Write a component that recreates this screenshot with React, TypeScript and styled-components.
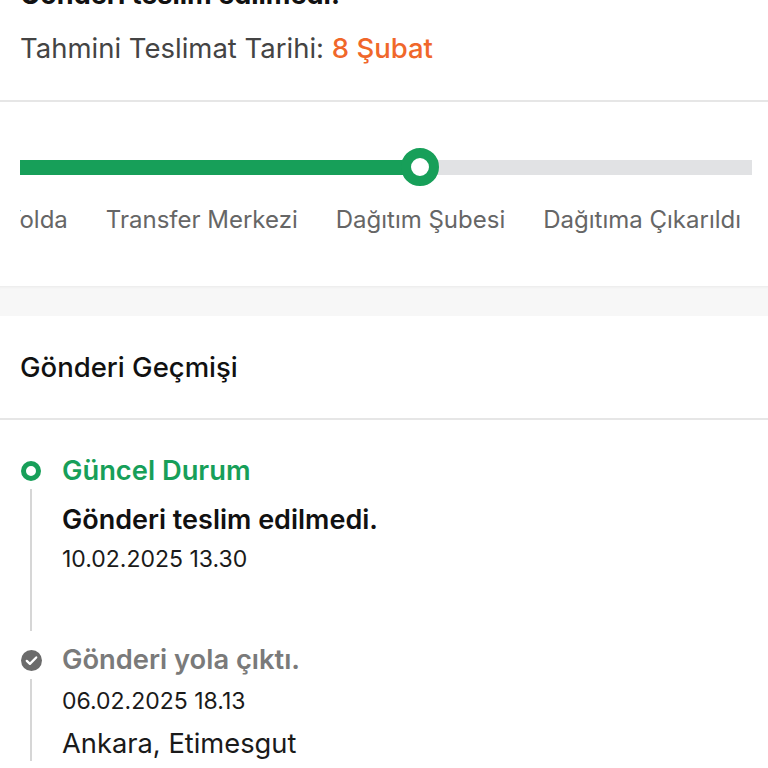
import React from "react";
import styled, { createGlobalStyle } from "styled-components";

const GlobalStyle = createGlobalStyle`
  html, body { margin: 0; padding: 0; background: #ffffff; }
  body {
    font-family: Inter, "Noto Sans", "Liberation Sans", sans-serif;
    color: #111;
    overflow: hidden;
    -webkit-font-smoothing: antialiased;
  }
  * { box-sizing: border-box; }
`;

const GREEN = "#179f59";

const Page = styled.div`
  width: 768px;
  height: 768px;
  overflow: hidden;
  background: #fff;
`;

const Summary = styled.section`
  padding: 0 20px 35px;
  border-bottom: 2px solid #e6e6e6;
`;

const SummaryTitle = styled.h1`
  margin: -22px 0 0;
  font-size: 27px;
  line-height: 34px;
  font-weight: 700;
  color: #111;
`;

const EstimateLine = styled.p`
  margin: 19px 0 0;
  font-size: 27.5px;
  line-height: 34px;
  color: #444;
`;

const EstimateDate = styled.span`
  color: #f0672a;
  font-weight: 500;
`;

const StepperSection = styled.section`
  padding: 46px 16px 51px 20px;
`;

const StepperViewport = styled.div`
  overflow: hidden;
`;

const StepperRow = styled.div<{ $offset: number }>`
  display: flex;
  width: max-content;
  margin-left: ${(p) => -p.$offset}px;
`;

const Step = styled.div`
  display: flex;
  flex-direction: column;
  align-items: center;
`;

const TrackRow = styled.div`
  position: relative;
  align-self: stretch;
  height: 38px;
  display: flex;
  align-items: center;
`;

const Track = styled.div<{ $state: "done" | "current" | "todo" }>`
  flex: 1;
  height: 15px;
  background: ${(p) =>
    p.$state === "done"
      ? GREEN
      : p.$state === "current"
      ? `linear-gradient(to right, ${GREEN} 50%, #e1e2e4 50%)`
      : "#e1e2e4"};
`;

const Dot = styled.span`
  position: absolute;
  left: 50%;
  top: 0;
  width: 38px;
  height: 38px;
  margin-left: -19px;
  border-radius: 50%;
  border: 10px solid ${GREEN};
  background: #fff;
`;

const StepLabel = styled.span`
  margin-top: 19px;
  padding: 0 19px;
  font-size: 24px;
  line-height: 30px;
  color: #666;
  white-space: nowrap;
`;

const Band = styled.div`
  height: 30px;
  background: #f7f7f7;
  box-shadow: inset 0 3px 3px -2px rgba(0, 0, 0, 0.06);
`;

const HistoryHeader = styled.h2`
  margin: 0;
  padding: 34px 20px 34px;
  font-size: 27.5px;
  line-height: 34px;
  font-weight: 500;
  color: #111;
  border-bottom: 2px solid #e6e6e6;
`;

const Timeline = styled.ol`
  list-style: none;
  margin: 0;
  padding: 34px 20px 0;
`;

const Item = styled.li<{ $pad: number }>`
  display: grid;
  grid-template-columns: 22px 1fr;
  column-gap: 20px;
  padding-bottom: ${(p) => p.$pad}px;
`;

const Rail = styled.div<{ $bottom: number }>`
  display: flex;
  flex-direction: column;
  align-items: center;
  padding-top: 7px;
  margin-bottom: ${(p) => -p.$bottom}px;
`;

const RingIcon = styled.span`
  width: 20px;
  height: 20px;
  border-radius: 50%;
  border: 5px solid ${GREEN};
  background: #fff;
  flex: none;
`;

const CheckIcon = styled.svg`
  width: 21px;
  height: 21px;
  flex: none;
`;

const RailLine = styled.span`
  flex: 1;
  width: 2px;
  margin-top: 8px;
  background: #d6d6d6;
`;

const Content = styled.div`
  display: flex;
  flex-direction: column;
`;

const ItemTitle = styled.div<{ $tone: "green" | "gray" }>`
  font-size: 27.3px;
  line-height: 34px;
  font-weight: 600;
  color: ${(p) => (p.$tone === "green" ? GREEN : "#7a7a7a")};
`;

const ItemStatus = styled.div`
  margin-top: 15px;
  font-size: 27px;
  line-height: 34px;
  font-weight: 600;
  color: #111;
`;

const ItemMeta = styled.div<{ $gap: number; $size?: number; $lh?: number }>`
  margin-top: ${(p) => p.$gap}px;
  font-size: ${(p) => p.$size ?? 23}px;
  line-height: ${(p) => p.$lh ?? 30}px;
  color: #1a1a1a;
`;

const steps = [
  "Yolda",
  "Transfer Merkezi",
  "Dağıtım Şubesi",
  "Dağıtıma Çıkarıldı",
];
const currentIndex = 2;

export default function App() {
  return (
    <Page>
      <GlobalStyle />
      <Summary>
        <SummaryTitle>Gönderi teslim edilmedi.</SummaryTitle>
        <EstimateLine>
          Tahmini Teslimat Tarihi: <EstimateDate>8 Şubat</EstimateDate>
        </EstimateLine>
      </Summary>

      <StepperSection>
        <StepperViewport>
          <StepperRow $offset={34}>
            {steps.map((s, i) => (
              <Step key={s}>
                <TrackRow>
                  <Track
                    $state={
                      i < currentIndex ? "done" : i === currentIndex ? "current" : "todo"
                    }
                  />
                  {i === currentIndex && <Dot />}
                </TrackRow>
                <StepLabel>{s}</StepLabel>
              </Step>
            ))}
          </StepperRow>
        </StepperViewport>
      </StepperSection>

      <Band />

      <HistoryHeader>Gönderi Geçmişi</HistoryHeader>

      <Timeline>
        <Item $pad={69}>
          <Rail $bottom={57}>
            <RingIcon />
            <RailLine />
          </Rail>
          <Content>
            <ItemTitle $tone="green">Güncel Durum</ItemTitle>
            <ItemStatus>Gönderi teslim edilmedi.</ItemStatus>
            <ItemMeta $gap={7}>10.02.2025 13.30</ItemMeta>
          </Content>
        </Item>
        <Item $pad={60}>
          <Rail $bottom={0}>
            <CheckIcon viewBox="0 0 24 24">
              <circle cx="12" cy="12" r="12" fill="#6b6b6b" />
              <path
                d="M6.6 12.4l3.6 3.5 7.2-7.4"
                fill="none"
                stroke="#fff"
                strokeWidth="2.6"
                strokeLinecap="round"
                strokeLinejoin="round"
              />
            </CheckIcon>
            <RailLine />
          </Rail>
          <Content>
            <ItemTitle $tone="gray">Gönderi yola çıktı.</ItemTitle>
            <ItemMeta $gap={9}>06.02.2025 18.13</ItemMeta>
            <ItemMeta $gap={11} $size={27.3} $lh={34}>
              Ankara, Etimesgut
            </ItemMeta>
          </Content>
        </Item>
      </Timeline>
    </Page>
  );
}
